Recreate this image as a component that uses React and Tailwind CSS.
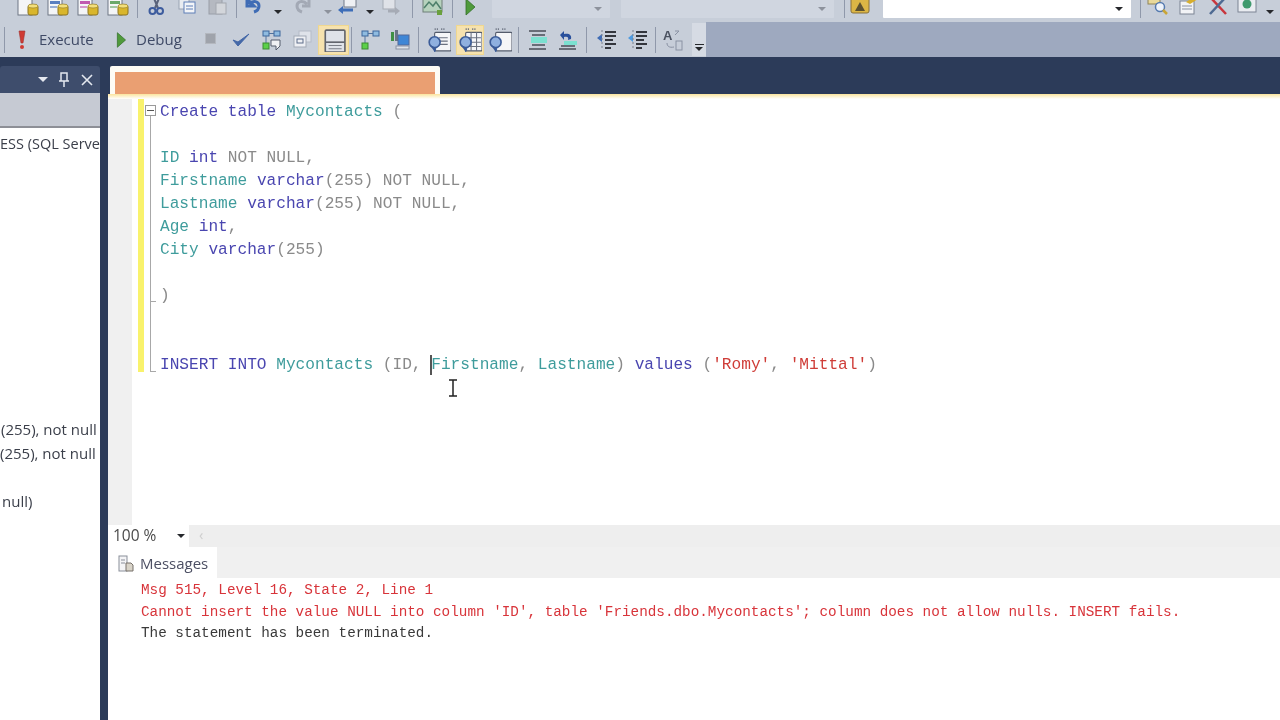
import React from 'react'

const Svg = ({ children, size = 22 }) => (
  <svg width={size} height={size} viewBox="0 0 22 22" className="shrink-0">{children}</svg>
)

const Caret = () => <div className="w-0 h-0 border-x-[4px] border-x-transparent border-t-[4px] border-t-[#26282c]" />
const CaretGrey = () => <div className="w-0 h-0 border-x-[4px] border-x-transparent border-t-[4px] border-t-[#8d929c]" />
const Sep = () => <div className="w-px h-[26px] bg-[#8f98aa] shrink-0" />

// database page with a yellow drum
const DbDoc = ({ tint = '#9aa4b4', label }) => (
  <Svg>
    <rect x="1" y="1" width="14" height="18" fill="#f4f5f7" stroke="#6f7785" />
    {label && <rect x="3" y="5" width="10" height="3" fill={tint} />}
    {label && <rect x="3" y="10" width="7" height="2" fill={tint} opacity=".6" />}
    <rect x="11" y="9" width="10" height="10" rx="2" fill="#d9b62c" stroke="#8c7420" />
    <ellipse cx="16" cy="10" rx="5" ry="2" fill="#f3df7a" stroke="#8c7420" strokeWidth=".6" />
  </Svg>
)

const Scissors = () => (
  <Svg>
    <path d="M8 0l5 12M15 0l-5 12" stroke="#59627a" strokeWidth="2" />
    <circle cx="7.500" cy="15" r="3" fill="none" stroke="#3d5c9e" strokeWidth="2" />
    <circle cx="15" cy="15" r="3" fill="none" stroke="#3d5c9e" strokeWidth="2" />
  </Svg>
)
const CopyIcon = () => (
  <Svg>
    <rect x="3" y="2" width="10" height="11" fill="#e9ecf1" stroke="#9aa3b3" />
    <rect x="8" y="6" width="11" height="11" fill="#f3f5f8" stroke="#5f7fb8" />
    <path d="M10 10h7M10 13h7" stroke="#5f7fb8" />
  </Svg>
)
const PasteIcon = () => (
  <Svg>
    <rect x="3" y="1" width="13" height="17" fill="#b5b9c1" stroke="#999ea8" />
    <rect x="10" y="7" width="10" height="11" fill="#d3d6db" stroke="#a4a8b0" />
  </Svg>
)
const Undo = ({ color = '#3f6cb5' }) => (
  <Svg>
    <path d="M5 3l0 7 7 0zM7 8c4-4 10-3 10 2 0 3-2 5-5 6" fill="none" stroke={color} strokeWidth="3" />
  </Svg>
)
const Redo = () => (
  <Svg>
    <path d="M17 3v7h-7M15 8c-4-4-10-3-10 2 0 3 2 5 5 6" fill="none" stroke="#a3a9b5" strokeWidth="3" />
  </Svg>
)
const NavIcon = () => (
  <Svg>
    <rect x="8" y="0" width="12" height="11" fill="#eef0f4" stroke="#737b8a" />
    <path d="M2 14l5-4v2.500h10v3H7V18z" fill="#3d6db8" />
  </Svg>
)
const NavGrey = () => (
  <Svg>
    <rect x="3" y="0" width="12" height="13" fill="#dfe2e8" stroke="#a6abb5" />
    <path d="M20 15l-5-4v2.500H8v3h7V19z" fill="#a6abb5" />
  </Svg>
)
const MapIcon = () => (
  <Svg>
    <rect x="1" y="1" width="19" height="15" fill="#b7d2bd" stroke="#6f7f78" />
    <path d="M2 12l5-6 4 4 3-4 5 7" fill="none" stroke="#4d7f6a" strokeWidth="1.500" />
    <rect x="15" y="14" width="5" height="5" fill="#6aa03c" />
  </Svg>
)
const PlayGreen = ({ s = 22 }) => (
  <Svg size={s}>
    <path d="M7 3l9 8-9 8z" fill="#4f9a3b" stroke="#32702a" strokeWidth=".8" />
  </Svg>
)
const Lock = () => (
  <Svg>
    <rect x="2" y="2" width="18" height="15" rx="2" fill="#dcb645" stroke="#89713a" />
    <path d="M6 15l5-9 5 9" fill="#5c5130" />
  </Svg>
)
const Finder = () => (
  <Svg>
    <rect x="1" y="0" width="12" height="8" fill="#e9d99a" stroke="#8f8458" />
    <circle cx="13" cy="11" r="4.500" fill="#eef3fa" stroke="#557ab0" strokeWidth="1.500" />
    <path d="M16 14l4 4" stroke="#c9a535" strokeWidth="2.500" />
  </Svg>
)
const FormIcon = () => (
  <Svg>
    <rect x="3" y="5" width="14" height="13" fill="#f2f3f6" stroke="#7d8494" />
    <path d="M5 10h10M5 13h10" stroke="#8a92a3" />
    <path d="M9 6l9-6 3 3-8 5z" fill="#d7ae2d" />
  </Svg>
)
const Tools = () => (
  <Svg>
    <path d="M4 2l15 16" stroke="#c8353c" strokeWidth="2.500" />
    <path d="M18 2L3 18" stroke="#4e6a92" strokeWidth="2.500" />
  </Svg>
)
const Globe = () => (
  <Svg>
    <rect x="2" y="0" width="18" height="16" fill="#e9ecf1" stroke="#7d8494" />
    <circle cx="11" cy="8" r="4.500" fill="#3f9a6e" />
  </Svg>
)

const Exclaim = () => (
  <Svg>
    <path d="M8 2h6l-2 12h-2z" fill="#cf3b34" stroke="#a0332f" strokeWidth=".6" />
    <circle cx="11" cy="18" r="2" fill="#cf3b34" />
  </Svg>
)
const Stop = () => <div className="w-[11px] h-[11px] mb-[3px] bg-[#9fa3ab] border border-[#b4b8bf]" />
const Check = () => (
  <Svg>
    <path d="M3 11l5 6L19 5 8 13z" fill="#4468a8" stroke="#4468a8" strokeWidth="1" />
  </Svg>
)
const Nodes = ({ chat }) => (
  <Svg>
    <rect x="3" y="2" width="6" height="5" fill="#8fbbe0" stroke="#3d669c" />
    <rect x="14" y="2" width="6" height="5" fill="#8fbbe0" stroke="#3d669c" />
    <path d="M9 4.500h5M6 7v8" stroke="#50729e" />
    <rect x="3" y="14" width="6" height="6" fill="#5bd04a" stroke="#3a8b32" />
    {chat && <path d="M11 11h9v6l-4 4v-4h-5z" fill="#f0f1f4" stroke="#555d6c" />}
  </Svg>
)
const Windows = () => (
  <Svg>
    <rect x="8" y="2" width="12" height="11" fill="#dfe3ea" stroke="#b5bbc7" />
    <rect x="3" y="7" width="12" height="11" fill="#eef0f4" stroke="#a2a9b6" />
    <rect x="6" y="10" width="6" height="4" fill="none" stroke="#5c6d8a" />
  </Svg>
)
const Split = () => (
  <Svg size={24}>
    <rect x="3" y="2" width="18" height="20" rx="1" fill="#dfe2e8" stroke="#62656d" strokeWidth="1.500" />
    <path d="M3 13h18" stroke="#62656d" strokeWidth="1.500" />
    <path d="M6 16h12M6 19h12" stroke="#7b7f88" />
  </Svg>
)
const Server = () => (
  <Svg>
    <rect x="2" y="3" width="3" height="9" fill="#3f8f45" />
    <rect x="6" y="1" width="3" height="11" fill="#6a7486" />
    <rect x="9" y="6" width="11" height="10" fill="#3e86d6" stroke="#52689a" />
    <rect x="7" y="17" width="13" height="3" fill="#dfe3ea" stroke="#8a92a3" />
  </Svg>
)
const Doc = ({ grid, plain }) => (
  <Svg size={24}>
    <rect x="7" y="4" width="15" height="17" rx="1" fill="#f5f6f8" stroke="#545c6c" />
    <path d="M7 1h4M13 1h4" stroke="#6b7280" strokeWidth="1.500" strokeDasharray="1 1" />
    {grid && <path d="M8 9h13M8 13h13M8 17h13M12 4v17M17 4v17" stroke="#6b7280" />}
    {!grid && !plain && <path d="M11 9h8M11 12h8M11 15h8" stroke="#6b7280" />}
    <circle cx="7" cy="13" r="5" fill="#8fb0df" stroke="#3b5c98" strokeWidth="1.500" />
    <path d="M3 16l5 3-1 3" fill="#3b5c98" stroke="#3b5c98" />
  </Svg>
)
const Comment = () => (
  <Svg>
    <path d="M3 2h17M6 6h13M6 16h13M3 20h17" stroke="#4a4e57" strokeWidth="1.500" />
    <rect x="5" y="8" width="16" height="6" fill="#7be0d0" />
  </Svg>
)
const Uncomment = () => (
  <Svg>
    <path d="M4 6l4-4v3c5-1 8 1 7 5l-3 1c1-3-1-4-4-3v3z" fill="#29509c" />
    <rect x="8" y="12" width="13" height="4" fill="#7be0d0" />
    <path d="M5 17h14M3 20h17" stroke="#4a4e57" strokeWidth="1.500" />
  </Svg>
)
const Indent = ({ color }) => (
  <Svg>
    <path d="M10 3h11M10 7h11M10 11h8M10 15h11M10 19h6" stroke="#33363d" strokeWidth="2" />
    <path d="M2 9l5-4v8z" fill={color} />
    <path d="M7 1v20" stroke="#7a808c" strokeDasharray="2 2" />
  </Svg>
)
const Replace = () => (
  <Svg>
    <text x="1" y="11" fontSize="13" fontWeight="700" fill="#4a5160" fontFamily="Liberation Sans, sans-serif">A</text>
    <rect x="14" y="12" width="6" height="9" fill="none" stroke="#8a92a3" />
    <path d="M5 14c0 3 2 5 7 4M13 2l4 0-4 4" fill="none" stroke="#8a92a3" />
  </Svg>
)

const Slot = ({ className = '', children }) => (
  <div className={`flex items-center justify-center shrink-0 ${className}`}>{children}</div>
)

const Combo = ({ className, white, dark }) => (
  <div className={`h-[18px] flex items-center justify-end pr-2 shrink-0 rounded-b-[1px] ${white ? 'bg-white' : 'bg-[#d0d6e0]'} ${className}`}>
    {dark ? <Caret /> : <CaretGrey />}
  </div>
)

const TopBar = () => (
  <div className="h-[22px] bg-[#c7ced9] flex items-end overflow-hidden pb-[4px] pl-[13px]">
    <Slot className="w-[30px]"><DbDoc /></Slot>
    <Slot className="w-[30px]"><DbDoc label tint="#5a7fc0" /></Slot>
    <Slot className="w-[30px]"><DbDoc label tint="#c05ab0" /></Slot>
    <Slot className="w-[30px]"><DbDoc label tint="#6aa86a" /></Slot>
    <div className="ml-1 mr-[3px] self-end"><Sep /></div>
    <Slot className="w-[30px]"><Scissors /></Slot>
    <Slot className="w-[31px]"><CopyIcon /></Slot>
    <Slot className="w-[30px]"><PasteIcon /></Slot>
    <div className="ml-1 self-end"><Sep /></div>
    <Slot className="w-[32px]"><Undo /></Slot>
    <Slot className="w-[12px] pb-1 ml-[3px]"><Caret /></Slot>
    <Slot className="w-[30px] ml-[4px]"><Redo /></Slot>
    <Slot className="w-[12px] pb-1 ml-[4px]"><CaretGrey /></Slot>
    <Slot className="w-[24px] ml-[1px]"><NavIcon /></Slot>
    <Slot className="w-[12px] pb-1 ml-[5px]"><Caret /></Slot>
    <Slot className="w-[26px] ml-[2px]"><NavGrey /></Slot>
    <div className="ml-[8px] self-end"><Sep /></div>
    <Slot className="w-[30px] ml-[5px]"><MapIcon /></Slot>
    <div className="ml-[4px] self-end"><Sep /></div>
    <Slot className="w-[28px] ml-[3px]"><PlayGreen /></Slot>
    <Combo className="w-[118px] ml-[8px]" />
    <Combo className="w-[213px] ml-[11px]" />
    <div className="ml-[10px] self-end"><Sep /></div>
    <Slot className="w-[26px] ml-[2px]"><Lock /></Slot>
    <Combo white dark className="w-[248px] ml-[10px]" />
    <div className="ml-[9px] self-end"><Sep /></div>
    <Slot className="w-[30px] ml-[2px]"><Finder /></Slot>
    <Slot className="w-[30px]"><FormIcon /></Slot>
    <Slot className="w-[30px]"><Tools /></Slot>
    <Slot className="w-[28px]"><Globe /></Slot>
    <Slot className="w-[12px] pb-1 ml-[3px]"><Caret /></Slot>
  </div>
)

const QueryBar = () => (
  <div className="h-[35px] bg-[#9ea9bf] flex text-[15px] text-[#3f4a66] font-['Open_Sans',sans-serif]">
    <div className="w-[706px] bg-[#c7ced9] flex items-center pl-1 shrink-0">
      <Sep />
      <Slot className="w-[24px] ml-[5px]"><Exclaim /></Slot>
      <span className="ml-[5px] w-[56px]">Execute</span>
      <Slot className="w-[24px] ml-[14px]"><PlayGreen s={20} /></Slot>
      <span className="ml-[3px] w-[50px]">Debug</span>
      <Slot className="w-[14px] ml-[17px]"><Stop /></Slot>
      <Slot className="w-[30px] ml-[9px]"><Check /></Slot>
      <Slot className="w-[30px]"><Nodes chat /></Slot>
      <Slot className="w-[30px] ml-[1px]"><Windows /></Slot>
      <Slot className="w-[31px] h-[30px] ml-[1px] bg-[#f6e2ae] border border-[#efd78f]"><Split /></Slot>
      <div className="ml-[2px]"><Sep /></div>
      <Slot className="w-[30px] ml-[3px]"><Nodes /></Slot>
      <Slot className="w-[30px]"><Server /></Slot>
      <div className="ml-[3px]"><Sep /></div>
      <Slot className="w-[30px] ml-[5px]"><Doc /></Slot>
      <Slot className="w-[28px] h-[30px] ml-[2px] bg-[#f6e2ae] border border-[#efd78f]"><Doc grid /></Slot>
      <Slot className="w-[30px] ml-[1px]"><Doc plain /></Slot>
      <div className="ml-[3px]"><Sep /></div>
      <Slot className="w-[30px] ml-[3px]"><Comment /></Slot>
      <Slot className="w-[30px]"><Uncomment /></Slot>
      <div className="ml-[4px]"><Sep /></div>
      <Slot className="w-[30px] ml-[4px]"><Indent color="#3f6cb5" /></Slot>
      <Slot className="w-[30px] ml-[1px]"><Indent color="#4f9be0" /></Slot>
      <div className="ml-[3px]"><Sep /></div>
      <Slot className="w-[28px] ml-[3px]"><Replace /></Slot>
      <div className="ml-auto w-[14px] h-[33px] bg-[#d6dbe4] flex flex-col items-center justify-end pb-[5px] gap-[2px]">
        <div className="w-[9px] h-[1px] bg-[#26282c]" />
        <Caret />
      </div>
    </div>
  </div>
)

const LeftPanel = () => (
  <div className="w-[100px] shrink-0 flex flex-col pt-[9px] bg-[#2c3b59] overflow-hidden">
    <div className="h-[27px] bg-[#3e4d6c] rounded-t-[3px] flex items-center justify-end pr-[7px] gap-[10px] shrink-0">
      <div className="w-0 h-0 border-x-[5px] border-x-transparent border-t-[5px] border-t-[#e4e8ef]" />
      <svg width="12" height="16" viewBox="0 0 12 16">
        <path d="M3 1h6v8H3zM1 9h10M6 9v6" fill="none" stroke="#e4e8ef" strokeWidth="1.500" />
      </svg>
      <svg width="12" height="12" viewBox="0 0 12 12" className="ml-[1px]">
        <path d="M1 1l10 10M11 1L1 11" stroke="#e4e8ef" strokeWidth="1.600" />
      </svg>
    </div>
    <div className="h-[35px] bg-[#c6cad3] border-b-2 border-[#8d8f96] shrink-0" />
    <div className="flex-1 bg-white text-[15px] text-[#3b3f4a] font-['Open_Sans',sans-serif] whitespace-nowrap leading-[24px]">
      <div className="mt-[4px] text-[14.500px]">ESS (SQL Serve</div>
      <div className="mt-[261px] pl-[1px]">(255), not null</div>
      <div className="pl-[0px]">(255), not null</div>
      <div className="mt-[24px] pl-[2px]">null)</div>
    </div>
  </div>
)

const kw = 'text-[#4a46b0]'
const obj = 'text-[#3f9c9c]'
const grey = 'text-[#8a8a8a]'
const red = 'text-[#cf3d38]'

const Code = ({ children }) => <div className="h-[23px] whitespace-pre">{children}</div>

const Editor = () => (
  <div className="flex-1 flex min-h-0 relative">
    <div className="w-[24px] bg-[#f0f0f0] shrink-0" />
    <div className="w-[6px] shrink-0" />
    <div className="w-[6px] h-[273px] bg-[#f9f26c] shrink-0" />
    <div className="relative w-[15px] shrink-0">
      <div className="absolute left-[1px] top-[6px] w-[11px] h-[11px] border border-[#9a9a9a] bg-white flex items-center justify-center">
        <div className="w-[7px] h-px bg-[#555]" />
      </div>
      <div className="absolute left-[6px] top-[17px] w-px h-[185px] bg-[#a8a8a8]" />
      <div className="absolute left-[6px] top-[202px] w-[6px] h-px bg-[#a8a8a8]" />
      <div className="absolute left-[6px] top-[203px] w-px h-[70px] bg-[#a8a8a8]" />
      <div className="absolute left-[6px] top-[272px] w-[6px] h-px bg-[#a8a8a8]" />
    </div>
    <div className="flex-1 pl-[1px] pt-[2px] font-['Liberation_Mono',monospace] text-[16.150px] leading-[23px]">
      <Code><span className={kw}>Create table</span> <span className={obj}>Mycontacts</span> <span className={grey}>(</span></Code>
      <Code> </Code>
      <Code><span className={obj}>ID</span> <span className={kw}>int</span> <span className={grey}>NOT NULL,</span></Code>
      <Code><span className={obj}>Firstname</span> <span className={kw}>varchar</span><span className={grey}>(255) NOT NULL,</span></Code>
      <Code><span className={obj}>Lastname</span> <span className={kw}>varchar</span><span className={grey}>(255) NOT NULL,</span></Code>
      <Code><span className={obj}>Age</span> <span className={kw}>int</span><span className={grey}>,</span></Code>
      <Code><span className={obj}>City</span> <span className={kw}>varchar</span><span className={grey}>(255)</span></Code>
      <Code> </Code>
      <Code><span className={grey}>)</span></Code>
      <Code> </Code>
      <Code> </Code>
      <Code>
        <span className={kw}>INSERT INTO</span> <span className={obj}>Mycontacts</span> <span className={grey}>(ID, </span>
        <span className="relative">
          <span className="absolute -left-[1px] -top-[1px] w-[2px] h-[20px] bg-[#555]" />
          <span className={obj}>Firstname</span>
        </span>
        <span className={grey}>, </span><span className={obj}>Lastname</span><span className={grey}>) </span>
        <span className={kw}>values</span> <span className={grey}>(</span><span className={red}>'Romy'</span><span className={grey}>, </span><span className={red}>'Mittal'</span><span className={grey}>)</span>
      </Code>
    </div>
    {/* mouse pointer */}
    <svg width="10" height="18" viewBox="0 0 10 18" className="absolute left-[340px] top-[280px]">
      <path d="M1 1h8M5 1v16M1 17h8" stroke="#222" strokeWidth="1.500" fill="none" />
    </svg>
  </div>
)

const Messages = () => (
  <div className="h-[142px] bg-white shrink-0 px-[33px] pt-[2px] font-['Liberation_Mono',monospace] text-[14.320px] leading-[21.500px] whitespace-pre">
    <div className="text-[#d8343a]">Msg 515, Level 16, State 2, Line 1</div>
    <div className="text-[#d8343a]">Cannot insert the value NULL into column 'ID', table 'Friends.dbo.Mycontacts'; column does not allow nulls. INSERT fails.</div>
    <div className="text-[#3a3a3a]">The statement has been terminated.</div>
  </div>
)

export default function App() {
  return (
    <div className="w-[1280px] h-[720px] overflow-hidden flex flex-col bg-[#2c3b59] blur-[0.5px]">
      <TopBar />
      <QueryBar />
      <div className="flex-1 flex min-h-0">
        <LeftPanel />
        <div className="w-[8px] shrink-0 bg-[#2c3b59]" />
        <div className="flex-1 flex flex-col min-w-0">
          {/* tab strip */}
          <div className="h-[37px] flex items-end shrink-0 pl-[2px]">
            <div className="w-[330px] h-[28px] bg-[#fefcf5] rounded-t-[2px] px-[5px] pt-[6px]">
              <div className="h-[22px] bg-[#ea9f72]" />
            </div>
          </div>
          <div className="h-[5px] bg-linear-to-b from-[#fbe49c] to-white shrink-0" />
          <div className="flex-1 flex flex-col min-h-0 bg-white">
            <Editor />
            <div className="h-[22px] bg-[#eeeeee] flex shrink-0">
              <div className="w-[81px] bg-white flex items-center justify-between pl-[5px] pr-[4px] text-[15.500px] text-[#4a4a4a] font-['Open_Sans',sans-serif]">
                <span>100 %</span>
                <Caret />
              </div>
              <span className="ml-[10px] text-[#cfcfcf] text-[14px] leading-[20px]">‹</span>
            </div>
            <div className="h-[31px] bg-[#f0f0f0] flex shrink-0">
              <div className="w-[109px] bg-white flex items-center pl-[10px] gap-[6px] pt-[2px] text-[15px] text-[#4c4f63] font-['Open_Sans',sans-serif]">
                <svg width="16" height="18" viewBox="0 0 16 18">
                  <rect x="1" y="1" width="8" height="15" fill="#f4f4f6" stroke="#8a8f9a" />
                  <path d="M3 5h4M3 8h4" stroke="#8a8f9a" />
                  <path d="M8 8h5l2 2v6H8z" fill="#d8d3c8" stroke="#77716a" />
                </svg>
                <span>Messages</span>
              </div>
            </div>
            <Messages />
          </div>
        </div>
      </div>
    </div>
  )
}
